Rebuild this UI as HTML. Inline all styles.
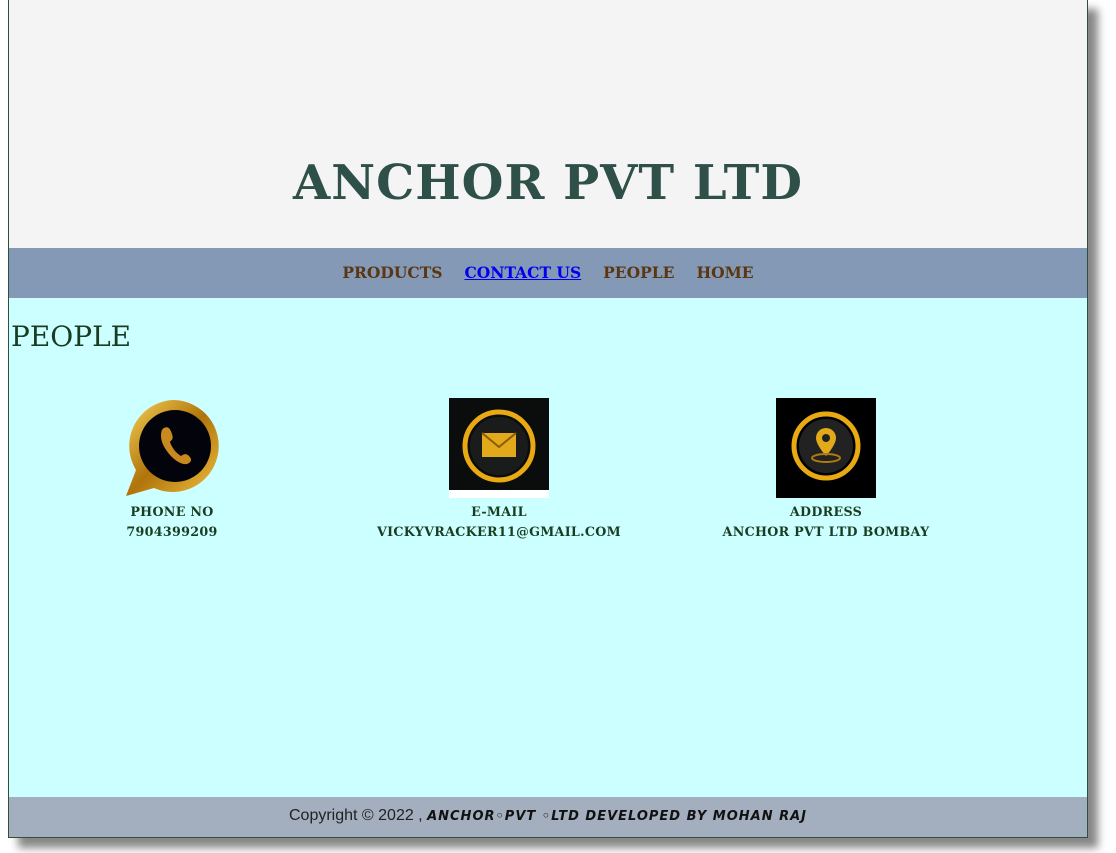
<!DOCTYPE html>
<html><head><style>
body{margin:0;background:#fff;font-family:"Liberation Serif",serif;}
.wrap{position:absolute;left:8px;top:-1px;width:1078px;height:837px;border:1px solid #2f4f3f;box-shadow:10px 10px 8px #888;background:#cff;}
.hdr{height:248px;background:#f4f4f4;position:relative;}
.hdr h1{position:absolute;left:0;right:0;top:155px;margin:0;text-align:center;font-family:"DejaVu Serif",serif;font-weight:bold;font-size:48px;color:#2f5049;letter-spacing:1px;}
.nav{height:50px;background:#8499b5;text-align:center;line-height:50px;font-family:"DejaVu Serif",serif;font-weight:bold;font-size:15.5px;}
.nav a{color:#5a3612;text-decoration:none;margin:0 11px;}
.nav a.c{color:#0000ee;text-decoration:underline;}
h2{margin:0;position:absolute;left:11px;top:320px;font-family:"DejaVu Serif",serif;font-weight:normal;font-size:28px;color:#1a3d22;}
.card{position:absolute;top:398px;width:300px;text-align:center;font-family:"DejaVu Serif",serif;font-weight:bold;font-size:12.7px;color:#1a3d22;line-height:20px;letter-spacing:0.3px;}
.ic{width:100px;height:100px;margin:0 auto 4px;display:block;}
.ft b{font-family:"DejaVu Sans",sans-serif;font-style:italic;font-size:13px;letter-spacing:1px;color:#111;}
</style></head><body>
<div class="wrap">
<div class="hdr"><h1>ANCHOR PVT LTD</h1></div>
<div class="nav"><a>PRODUCTS</a><a class="c">CONTACT US</a><a>PEOPLE</a><a>HOME</a></div>
</div>
<h2>PEOPLE</h2>
<div class="card" style="left:22px"><svg class="ic" viewBox="0 0 100 100"><defs><linearGradient id="g" x1="0" y1="0" x2="1" y2="1"><stop offset="0" stop-color="#f8d25a"/><stop offset=".5" stop-color="#b0740a"/><stop offset="1" stop-color="#f1c040"/></linearGradient></defs><path d="M52 2a46 46 0 1 1-20 88L4 98l10-26A46 46 0 0 1 52 2z" fill="url(#g)"/><circle cx="53" cy="48" r="36" fill="#03030c"/><path d="M42 30c4-2 6 0 8 6s-1 6-2 8c2 6 6 11 11 14 3-2 5-3 8 0s3 6-2 8c-10 2-26-16-26-28 0-5 1-7 3-8z" fill="#c88a1e"/></svg>PHONE NO<br>7904399209</div>
<div class="card" style="left:349px"><svg class="ic" viewBox="0 0 100 100"><rect width="100" height="92" fill="#0b0c0c"/><rect y="92" width="100" height="8" fill="#fff"/><ellipse cx="50" cy="48" rx="34" ry="34" fill="none" stroke="#e8a912" stroke-width="5"/><ellipse cx="50" cy="48" rx="29" ry="29" fill="#1a1c1c"/><rect x="33" y="35" width="34" height="24" fill="#e2aa1a"/><path d="M33 35l17 14 17-14" fill="none" stroke="#8a5a05" stroke-width="2"/></svg>E-MAIL<br>VICKYVRACKER11@GMAIL.COM</div>
<div class="card" style="left:676px"><svg class="ic" viewBox="0 0 100 100"><rect width="100" height="100" fill="#000"/><circle cx="50" cy="48" r="32" fill="none" stroke="#e8a912" stroke-width="5"/><circle cx="50" cy="48" r="27" fill="#222"/><path d="M50 30a10 10 0 0 1 10 10c0 7-10 18-10 18s-10-11-10-18a10 10 0 0 1 10-10z" fill="#e2aa1a"/><circle cx="50" cy="40" r="4" fill="#222"/><ellipse cx="50" cy="60" rx="14" ry="4" fill="none" stroke="#b07a10" stroke-width="2"/></svg>ADDRESS<br>ANCHOR PVT LTD BOMBAY</div>
<div class="ft" style="position:absolute;left:9px;width:1078px;top:797px;height:40px;border-bottom:1px solid #2f4f3f;background:#a3aebe;text-align:center;line-height:38px;font-family:'Liberation Sans',sans-serif;font-size:16px;color:#222;">Copyright © 2022 , <b>ANCHOR◦PVT ◦LTD DEVELOPED BY MOHAN RAJ</b></div>
</body></html>
